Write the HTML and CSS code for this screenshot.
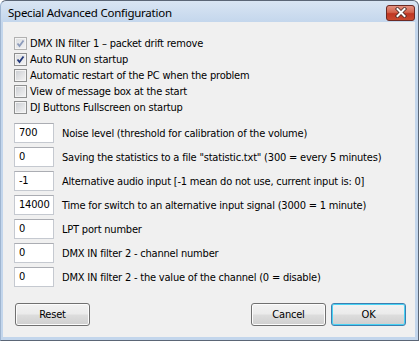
FILE: index.html
```html
<!DOCTYPE html>
<html lang="en">
<head>
  <meta charset="UTF-8">
  <title>Special Advanced Configuration</title>
  <link rel="stylesheet" href="styles.css">
</head>
<body>
  <div class="window">
    <!-- Title bar -->
    <div class="titlebar">
      <span class="title">Special Advanced Configuration</span>
      <span class="close_btn">
        <svg width="16" height="11" viewBox="0 0 16 11">
          <path d="M4.5 2 L11.5 9 M11.5 2 L4.5 9" stroke="#4a2a26" stroke-width="3.6" stroke-linecap="square"/>
          <path d="M4.5 2 L11.5 9 M11.5 2 L4.5 9" stroke="#ffffff" stroke-width="2" stroke-linecap="square"/>
        </svg>
      </span>
    </div>

    <!-- Client area -->
    <div class="client">
      <div class="checks">
        <label class="check_row">
          <span class="checkbox disabled checked">
            <svg width="11" height="11" viewBox="0 0 11 11"><path d="M2.5 5.5 L4.5 8 L8.5 2.5" fill="none" stroke="#8c9bbb" stroke-width="1.8"/></svg>
          </span>
          DMX IN filter 1 – packet drift remove
        </label>
        <label class="check_row">
          <span class="checkbox checked">
            <svg width="11" height="11" viewBox="0 0 11 11"><path d="M2.5 5.5 L4.5 8 L8.5 2.5" fill="none" stroke="#23397a" stroke-width="1.8"/></svg>
          </span>
          Auto RUN on startup
        </label>
        <label class="check_row"><span class="checkbox"></span>Automatic restart of the PC when the problem</label>
        <label class="check_row"><span class="checkbox"></span>View of message box at the start</label>
        <label class="check_row"><span class="checkbox"></span>DJ Buttons Fullscreen on startup</label>
      </div>

      <div class="fields">
        <div class="field_row"><div class="edit">700</div><span>Noise level (threshold for calibration of the volume)</span></div>
        <div class="field_row"><div class="edit">0</div><span>Saving the statistics to a file "statistic.txt" (300 = every 5 minutes)</span></div>
        <div class="field_row"><div class="edit">-1</div><span>Alternative audio input [-1 mean do not use, current input is: 0]</span></div>
        <div class="field_row"><div class="edit">14000</div><span>Time for switch to an alternative input signal (3000 = 1 minute)</span></div>
        <div class="field_row"><div class="edit">0</div><span>LPT port number</span></div>
        <div class="field_row"><div class="edit">0</div><span>DMX IN filter 2 - channel number</span></div>
        <div class="field_row"><div class="edit">0</div><span>DMX IN filter 2 - the value of the channel (0 = disable)</span></div>
      </div>

      <div class="buttons">
        <button class="btn">Reset</button>
        <div class="spacer"></div>
        <button class="btn">Cancel</button>
        <button class="btn default">OK</button>
      </div>
    </div>
  </div>
</body>
</html>
```

FILE: styles.css
```css
/* Page */
body {
  margin: 0;
  padding: 0;
  background-color: #ffffff;
  font-family: "DejaVu Sans Condensed", "DejaVu Sans", sans-serif;
  font-stretch: condensed;
  font-size: 11px;
  letter-spacing: -0.2px;
  color: #000000;
}

/* Window frame */
.window {
  width: 419px;
  height: 341px;
  box-sizing: border-box;
  border: 1px solid #5b6676;
  border-left-color: #9fb5d0;
  border-radius: 6px 6px 0 0;
  background: linear-gradient(#d9e5f3 0px, #c3d6ec 22px, #c3d6ec 100%);
  display: flex;
  flex-direction: column;
}

.titlebar {
  height: 21px;
  display: flex;
  align-items: center;
  padding-left: 7px;
  padding-right: 3px;
}
.title {
  flex: 1;
  font-family: "Noto Sans", "Open Sans", sans-serif;
  font-stretch: normal;
  font-size: 11.5px;
  letter-spacing: -0.25px;
  color: #000000;
  padding-top: 1px;
}
.close_btn {
  flex: none;
  width: 27px;
  height: 14px;
  margin-top: 2px;
  border: 1px solid #6b2a24;
  border-radius: 3px;
  background: #c94b36 linear-gradient(#e39080 0%, #d4644e 45%, #bf3522 55%, #c9492f 100%);
  display: flex;
  align-items: center;
  justify-content: center;
}

/* Client area */
.client {
  flex: 1;
  margin: 0 3px 3px 2px;
  background-color: #f0f0f0;
  padding: 13px 9px 0 11px;
  display: flex;
  flex-direction: column;
}

/* Checkboxes */
.checks {
  display: flex;
  flex-direction: column;
}
.check_row {
  height: 16px;
  display: flex;
  align-items: center;
  gap: 3px;
}
.checkbox {
  width: 11px;
  height: 11px;
  border: 1px solid #8e8f8f;
  background: linear-gradient(135deg, #c9ccd1 0%, #e2e3e5 55%, #f4f4f4 100%);
  box-shadow: inset 0 0 0 1px #f4f4f4;
  display: flex;
}
.checkbox.checked {
  background: linear-gradient(135deg, #dcdee1 0%, #f2f2f3 100%);
}
.checkbox.disabled {
  border-color: #b1b1b1;
}

/* Edit fields */
.fields {
  margin-top: 8px;
  display: flex;
  flex-direction: column;
  gap: 4px;
}
.field_row {
  height: 20px;
  display: flex;
  align-items: center;
  gap: 8px;
}
.edit {
  width: 40px;
  height: 20px;
  box-sizing: border-box;
  border: 1px solid #c5c9d0;
  border-top-color: #abadb3;
  background-color: #ffffff;
  padding: 0 4px;
  line-height: 18px;
}

/* Buttons */
.buttons {
  margin-top: 16px;
  display: flex;
  gap: 5px;
  padding-left: 1px;
}
.spacer {
  flex: 1;
}
.btn {
  width: 75px;
  height: 23px;
  border: 1px solid #707070;
  border-radius: 3px;
  background: linear-gradient(#f2f2f2 0%, #ebebeb 48%, #dddddd 52%, #cfcfcf 100%);
  box-shadow: inset 0 0 0 1px #fcfcfc;
  font-family: inherit;
  font-stretch: condensed;
  font-size: 11px;
  letter-spacing: -0.2px;
  color: #000000;
  padding: 0;
}
.btn.default {
  border-color: #3c7fb1;
  box-shadow: inset 0 0 0 1px #48d2f4;
}
```
